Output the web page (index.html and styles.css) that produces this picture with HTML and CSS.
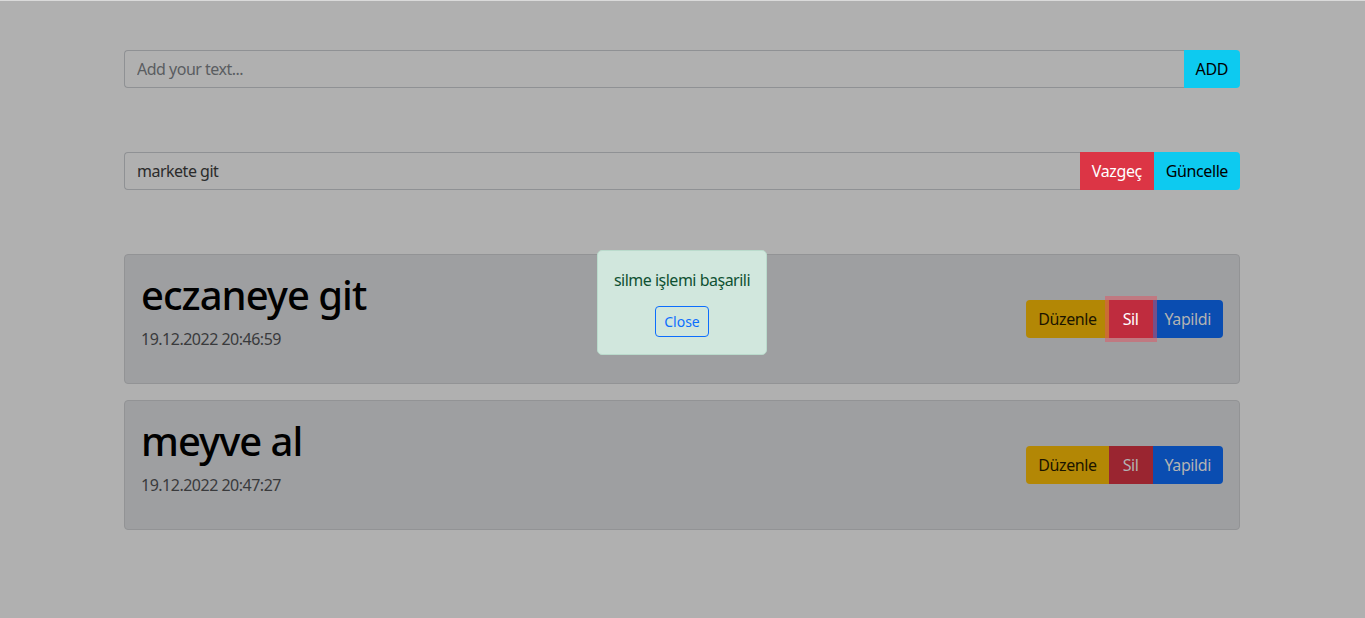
FILE: index.html
```html
<!DOCTYPE html>
<html lang="tr">
<head>
<meta charset="utf-8">
<title>Todo</title>
<link rel="stylesheet" href="styles.css">
</head>
<body>
<div class="page">
  <div class="container">
    <div class="input-group">
      <input class="form-control" type="text" placeholder="Add your text...">
      <button class="btn btn-info btn-last">ADD</button>
    </div>
    <div class="input-group">
      <input class="form-control" type="text" value="markete git">
      <button class="btn btn-danger">Vazgeç</button>
      <button class="btn btn-info btn-last">Güncelle</button>
    </div>
    <div class="list">
      <div class="card">
        <div class="card-text">
          <h1 class="title">eczaneye git</h1>
          <p class="date">19.12.2022 20:46:59</p>
        </div>
        <div class="btn-group">
          <button class="btn btn-warning btn-first">Düzenle</button>
          <button class="btn btn-sil btn-focus">Sil</button>
          <button class="btn btn-primary btn-last">Yapildi</button>
        </div>
      </div>
      <div class="card">
        <div class="card-text">
          <h1 class="title">meyve al</h1>
          <p class="date">19.12.2022 20:47:27</p>
        </div>
        <div class="btn-group">
          <button class="btn btn-warning btn-first">Düzenle</button>
          <button class="btn btn-sil">Sil</button>
          <button class="btn btn-primary btn-last">Yapildi</button>
        </div>
      </div>
    </div>
  </div>
  <div class="toast">
    <p class="toast-msg">silme işlemi başarili</p>
    <button class="btn-close-outline">Close</button>
  </div>
</div>
</body>
</html>
```

FILE: styles.css
```css
* { box-sizing: border-box; }
html, body { margin: 0; padding: 0; }
body {
  background: #b0b0b0;
  font-family: "Noto Sans", "Segoe UI", sans-serif;
  font-size: 16px;
  line-height: 1.5;
  letter-spacing: -0.5px;
  color: #000;
  height: 618px;
  overflow: hidden;
}
.page {
  position: relative;
  height: 618px;
  border-top: 1px solid #dadada;
}
.container {
  width: 1140px;
  margin-left: 112px;
  padding: 49px 12px 0;
  display: flex;
  flex-direction: column;
  gap: 64px;
}
.input-group {
  display: flex;
  height: 38px;
}
.form-control {
  flex: 1;
  min-width: 0;
  height: 38px;
  background: #b0b0b0;
  border: 1px solid #8f9194;
  border-right: none;
  border-radius: 4px 0 0 4px;
  padding: 6px 12px;
  font: inherit;
  font-size: 16px;
  letter-spacing: -0.5px;
  color: #2b2b2b;
  outline: none;
}
.form-control::placeholder { color: #5a5d61; }
.btn {
  font: inherit;
  font-size: 16px;
  line-height: 24px;
  letter-spacing: -0.4px;
  padding: 6px 12px;
  border: none;
  border-radius: 0;
  height: 38px;
  cursor: pointer;
  position: relative;
}
.btn-last { border-radius: 0 4px 4px 0; }
.btn-first { border-radius: 4px 0 0 4px; }
.btn-info { background: #0dcaf0; color: #000; }
.btn-danger { background: #dc3545; color: #fff; }
.list {
  display: flex;
  flex-direction: column;
  gap: 16px;
}
.card {
  display: flex;
  align-items: center;
  justify-content: space-between;
  background: #9e9fa1;
  border: 1px solid #929395;
  border-radius: 4px;
  padding: 16px;
}
.title {
  margin: 0 0 8px;
  font-size: 40px;
  font-weight: 500;
  line-height: 48px;
  letter-spacing: -1px;
  color: #000;
}
.date {
  margin: 0 0 16px;
  color: #393a3c;
  font-size: 16px;
  line-height: 24px;
}
.btn-group { display: flex; }
.btn-warning { background: #b38705; color: #1c1500; }
.btn-sil { background: #9a2530; color: #b3b3b3; padding: 6px 14px; }
.btn-primary { background: #0a4db1; color: #b3b3b3; }
.btn-focus {
  background: #bf2c3e;
  color: #fff;
  z-index: 2;
  box-shadow: 0 0 0 4px rgba(225, 83, 97, 0.5);
}
.toast {
  position: absolute;
  left: 597px;
  top: 249px;
  width: 170px;
  height: 105px;
  background: #d1e7dd;
  border: 1px solid #badbcc;
  border-radius: 5px;
  display: flex;
  flex-direction: column;
  align-items: center;
  padding-top: 17px;
}
.toast-msg {
  margin: 0 0 14px;
  color: #0f5132;
  font-size: 16px;
  line-height: 24px;
}
.btn-close-outline {
  font: inherit;
  font-size: 14px;
  line-height: 21px;
  padding: 4px 8px;
  background: transparent;
  color: #0d6efd;
  border: 1px solid #0d6efd;
  border-radius: 4px;
  cursor: pointer;
}
```
